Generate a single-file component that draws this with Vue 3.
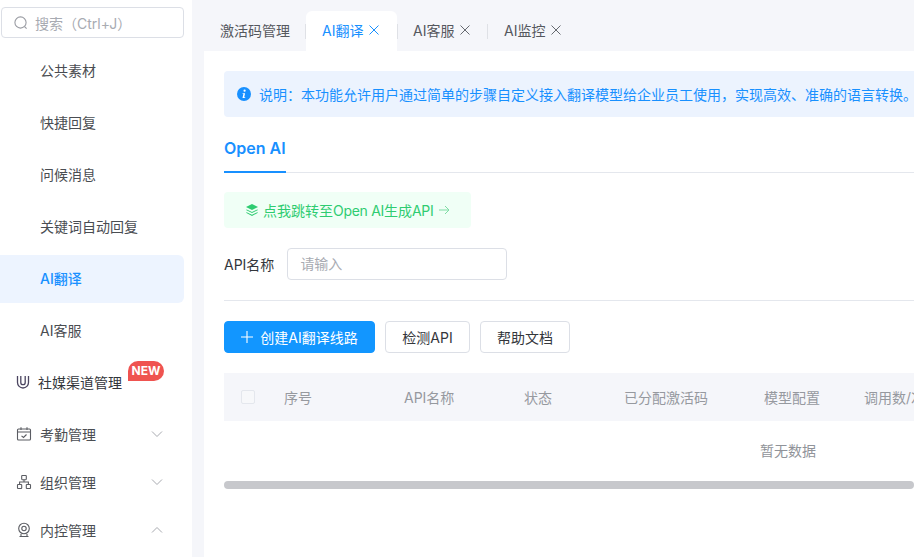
<script setup>
const subs = ['公共素材', '快捷回复', '问候消息', '关键词自动回复', 'AI翻译', 'AI客服']
const cols = [
  { t: '序号', w: 120 }, { t: 'API名称', w: 120 }, { t: '状态', w: 100 },
  { t: '已分配激活码', w: 140 }, { t: '模型配置', w: 100 }, { t: '调用数/次', w: 100 }
]
</script>

<template>
  <div class="page">
    <aside class="side">
      <div class="search">
        <svg width="16" height="16" viewBox="0 0 16 16" fill="none" stroke="#9a9ca3" stroke-width="1.1"><circle cx="7.5" cy="7.5" r="5.6"/><path d="M11.6 11.6l2 2"/></svg>
        <span>搜索（Ctrl+J）</span>
      </div>
      <div class="subs">
        <div v-for="s in subs" :key="s" class="sub" :class="{ on: s === 'AI翻译' }">{{ s }}</div>
      </div>
      <div class="group social">
        <svg width="14" height="14" viewBox="0 0 14 14" fill="none" stroke="#4b4560" stroke-width="1.3"><path d="M1.5 1v6.5a5.5 5.5 0 0 0 11 0V1"/><path d="M4.8 1v6.5a2.2 2.2 0 0 0 4.4 0V1"/></svg>
        <span>社媒渠道管理</span>
        <b class="new">NEW</b>
      </div>
      <div class="group">
        <svg width="16" height="16" viewBox="0 0 16 16" fill="none" stroke="#5b5d63" stroke-width="1.1"><rect x="1.5" y="3" width="13" height="11" rx="1"/><path d="M1.5 6h13M5 1.2V4M11 1.2V4M5.5 9.8l2 1.7 3-3"/></svg>
        <span>考勤管理</span>
        <svg class="chev" width="14" height="14" viewBox="0 0 14 14" fill="none" stroke="#a8aab0"><path d="M2 4.5l5 5 5-5"/></svg>
      </div>
      <div class="group">
        <svg width="16" height="16" viewBox="0 0 16 16" fill="none" stroke="#5b5d63" stroke-width="1.1"><rect x="5.7" y="1.5" width="4.6" height="4.2" rx=".6"/><rect x="1.5" y="10.5" width="4.2" height="4" rx=".6"/><rect x="10.3" y="10.5" width="4.2" height="4" rx=".6"/><path d="M8 5.7V8M3.6 10.5V8h8.8v2.5"/></svg>
        <span>组织管理</span>
        <svg class="chev" width="14" height="14" viewBox="0 0 14 14" fill="none" stroke="#a8aab0"><path d="M2 4.5l5 5 5-5"/></svg>
      </div>
      <div class="group">
        <svg width="16" height="16" viewBox="0 0 16 16" fill="none" stroke="#5b5d63" stroke-width="1.1"><circle cx="8" cy="6.5" r="5.3"/><circle cx="8" cy="6.5" r="2.2"/><path d="M5 12v2.5h6V12M3.5 14.5h9"/></svg>
        <span>内控管理</span>
        <svg class="chev" width="14" height="14" viewBox="0 0 14 14" fill="none" stroke="#a8aab0"><path d="M2 9.5l5-5 5 5"/></svg>
      </div>
    </aside>

    <main class="main">
      <nav class="tabs">
        <div class="tab first">激活码管理</div>
        <div class="tab active">AI翻译<svg width="12" height="12" viewBox="0 0 12 12" stroke="#1890ff" fill="none"><path d="M1.5 1.5l9 9M10.5 1.5l-9 9"/></svg></div>
        <div class="tab sep">AI客服<svg width="12" height="12" viewBox="0 0 12 12" stroke="#666a70" fill="none"><path d="M1.5 1.5l9 9M10.5 1.5l-9 9"/></svg></div>
        <div class="tab sep">AI监控<svg width="12" height="12" viewBox="0 0 12 12" stroke="#666a70" fill="none"><path d="M1.5 1.5l9 9M10.5 1.5l-9 9"/></svg></div>
      </nav>

      <section class="panel">
        <div class="notice">
          <svg width="14" height="14" viewBox="0 0 14 14"><circle cx="7" cy="7" r="7" fill="#1890ff"/><circle cx="7.6" cy="3.7" r="1.1" fill="#fff"/><path d="M5.6 6.2h2.5L7.2 10.2h1v.9H5.5l.9-4h-.8z" fill="#fff"/></svg>
          <span>说明：本功能允许用户通过简单的步骤自定义接入翻译模型给企业员工使用，实现高效、准确的语言转换。</span>
        </div>

        <div class="subtabs"><span class="subtab">Open AI</span></div>

        <div class="jump">
          <svg width="14" height="14" viewBox="0 0 14 14" fill="#2ecc71"><path d="M7 1l6 3-6 3-6-3z"/><path d="M1.8 6.4L7 9l5.2-2.6L13 7 7 10 1 7z"/><path d="M1.8 9.2L7 11.8l5.2-2.6.8.6L7 13 1 9.8z"/></svg>
          <span class="jump-text">点我跳转至<span class="tight">Open AI</span>生成<span class="tight">API</span></span>
          <svg width="12" height="12" viewBox="0 0 12 12" fill="none" stroke="#7fdca4"><path d="M1 6h10M7 2l4 4-4 4"/></svg>
        </div>

        <div class="field">
          <label>API名称</label>
          <div class="input">请输入</div>
        </div>

        <div class="actions">
          <button class="btn primary"><svg width="12" height="12" viewBox="0 0 12 12" stroke="#fff" stroke-width="1.1" fill="none"><path d="M6 0v12M0 6h12"/></svg>创建AI翻译线路</button>
          <button class="btn second">检测API</button>
          <button class="btn third">帮助文档</button>
        </div>

        <div class="thead">
          <div class="cb-cell"><i class="cb"></i></div>
          <div v-for="c in cols" :key="c.t" class="th" :style="{ width: c.w + 'px' }">{{ c.t }}</div>
        </div>
        <div class="empty">暂无数据</div>
        <div class="scroll"></div>
      </section>
    </main>
  </div>
</template>

<style>
html, body { margin: 0; overflow: hidden; }
</style>

<style scoped>
.page {
  width: 914px; height: 557px; display: flex; overflow: hidden; background: #f5f6fa;
  font-family: Inter, "Noto Sans CJK SC", sans-serif; font-size: 14px; color: #33363b;
}
.side { width: 192px; flex: none; height: 557px; background: #fff; padding-top: 7px; box-sizing: border-box; overflow: hidden; }
.search {
  margin-left: 1px; width: 183px; height: 31px; box-sizing: border-box; border: 1px solid #dcdfe6; border-radius: 4px;
  display: flex; align-items: center; gap: 6px; padding-left: 11px; color: #a8abb2; white-space: nowrap;
}
.subs { margin-top: 9px; display: flex; flex-direction: column; gap: 4px; }
.sub { height: 48px; width: 184px; line-height: 48px; padding-left: 40px; box-sizing: border-box; color: #4a4d52; border-radius: 0 6px 6px 0; }
.sub.on { background: #edf4ff; color: #1890ff; font-weight: 500; }
.group { height: 48px; display: flex; align-items: center; padding-left: 16px; position: relative; gap: 8px; color: #4a4d52; width: 184px; box-sizing: border-box; white-space: nowrap; }
.group .chev { position: absolute; left: 150px; top: 17px; }
.social { margin: 3px 0 4px; color: #33363b; gap: 8px; }
.new {
  position: absolute; left: 128px; top: 3px; height: 20px; width: 36px; line-height: 20px; text-align: center;
  background: #ef5350; color: #fff; font-size: 12px; font-weight: 700; border-radius: 10px 10px 10px 0;
}
.main { flex: 1; min-width: 0; padding-left: 12px; }
.tabs { height: 51px; display: flex; align-items: flex-end; }
.tab { height: 40px; display: flex; align-items: center; gap: 5px; padding: 0 0 2px 16px; color: #55585e; position: relative; box-sizing: border-box; white-space: nowrap; flex: none; }
.tab.first { width: 102px; }
.tab.active { width: 91px; background: #fff; color: #1890ff; border-radius: 6px 6px 0 0; }
.tab.sep { width: 91px; }
.tab.first::after, .tab.active::after, .tab.sep::after { content: ""; position: absolute; right: 0; top: 13px; height: 15px; width: 1px; background: #dfe1e6; }
.tab.active::after { right: -1px; }
.tab.sep:last-child::after { display: none; }
.panel { width: 900px; height: 506px; background: #fff; padding: 20px; box-sizing: border-box; overflow: hidden; }
.notice {
  width: 860px; height: 46px; box-sizing: border-box; background: #ecf3fe; border-radius: 4px; display: flex; align-items: center; gap: 8px;
  padding-left: 13px; color: #1890ff; white-space: nowrap;
}
.subtabs { margin-top: 9px; height: 46px; border-bottom: 1px solid #e4e7ed; display: flex; width: 690px; }
.subtab { line-height: 44px; font-size: 16px; font-weight: 600; color: #1890ff; border-bottom: 2px solid #1890ff; margin-bottom: -1px; height: 45px; }
.jump {
  margin-top: 19px; width: 247px; height: 36px; background: #f0fff6; border-radius: 4px; display: flex; align-items: center; gap: 5px; padding-left: 21px;
  box-sizing: border-box; color: #2ecc71; white-space: nowrap;
}
.jump-text { margin-left: -1px; }
.tight { letter-spacing: -0.3px; }
.field { margin-top: 20px; display: flex; align-items: center; gap: 13px; height: 32px; }
.input { width: 220px; height: 32px; box-sizing: border-box; border: 1px solid #dcdfe6; border-radius: 4px; padding-left: 12px; line-height: 30px; color: #a8abb2; }
.actions { margin-top: 20px; border-top: 1px solid #e4e7ed; width: 690px; padding-top: 20px; display: flex; gap: 10px; }
.btn {
  height: 32px; padding: 0; box-sizing: border-box; border: 1px solid #dcdfe6; background: #fff; border-radius: 4px; font: inherit; color: #33363b;
  display: flex; align-items: center; justify-content: center; gap: 7px; white-space: nowrap;
}
.btn.primary { width: 151px; background: #1296ff; border-color: #1296ff; color: #fff; }
.btn.second { width: 85px; }
.btn.third { width: 90px; }
.thead { margin-top: 20px; width: 690px; height: 48px; background: #f5f6fa; display: flex; align-items: center; color: #96999f; white-space: nowrap; overflow: hidden; }
.cb-cell { width: 60px; flex: none; padding-left: 17px; box-sizing: border-box; display: flex; }
.cb { display: block; width: 14px; height: 14px; border: 1px solid #e4e7ed; border-radius: 2px; box-sizing: border-box; background: #f7f8fa; }
.th { flex: none; }
.empty { height: 60px; line-height: 60px; text-align: center; color: #909399; width: 1128px; }
.scroll { width: 690px; height: 8px; background: #c7c8cc; border-radius: 4px; }
</style>
